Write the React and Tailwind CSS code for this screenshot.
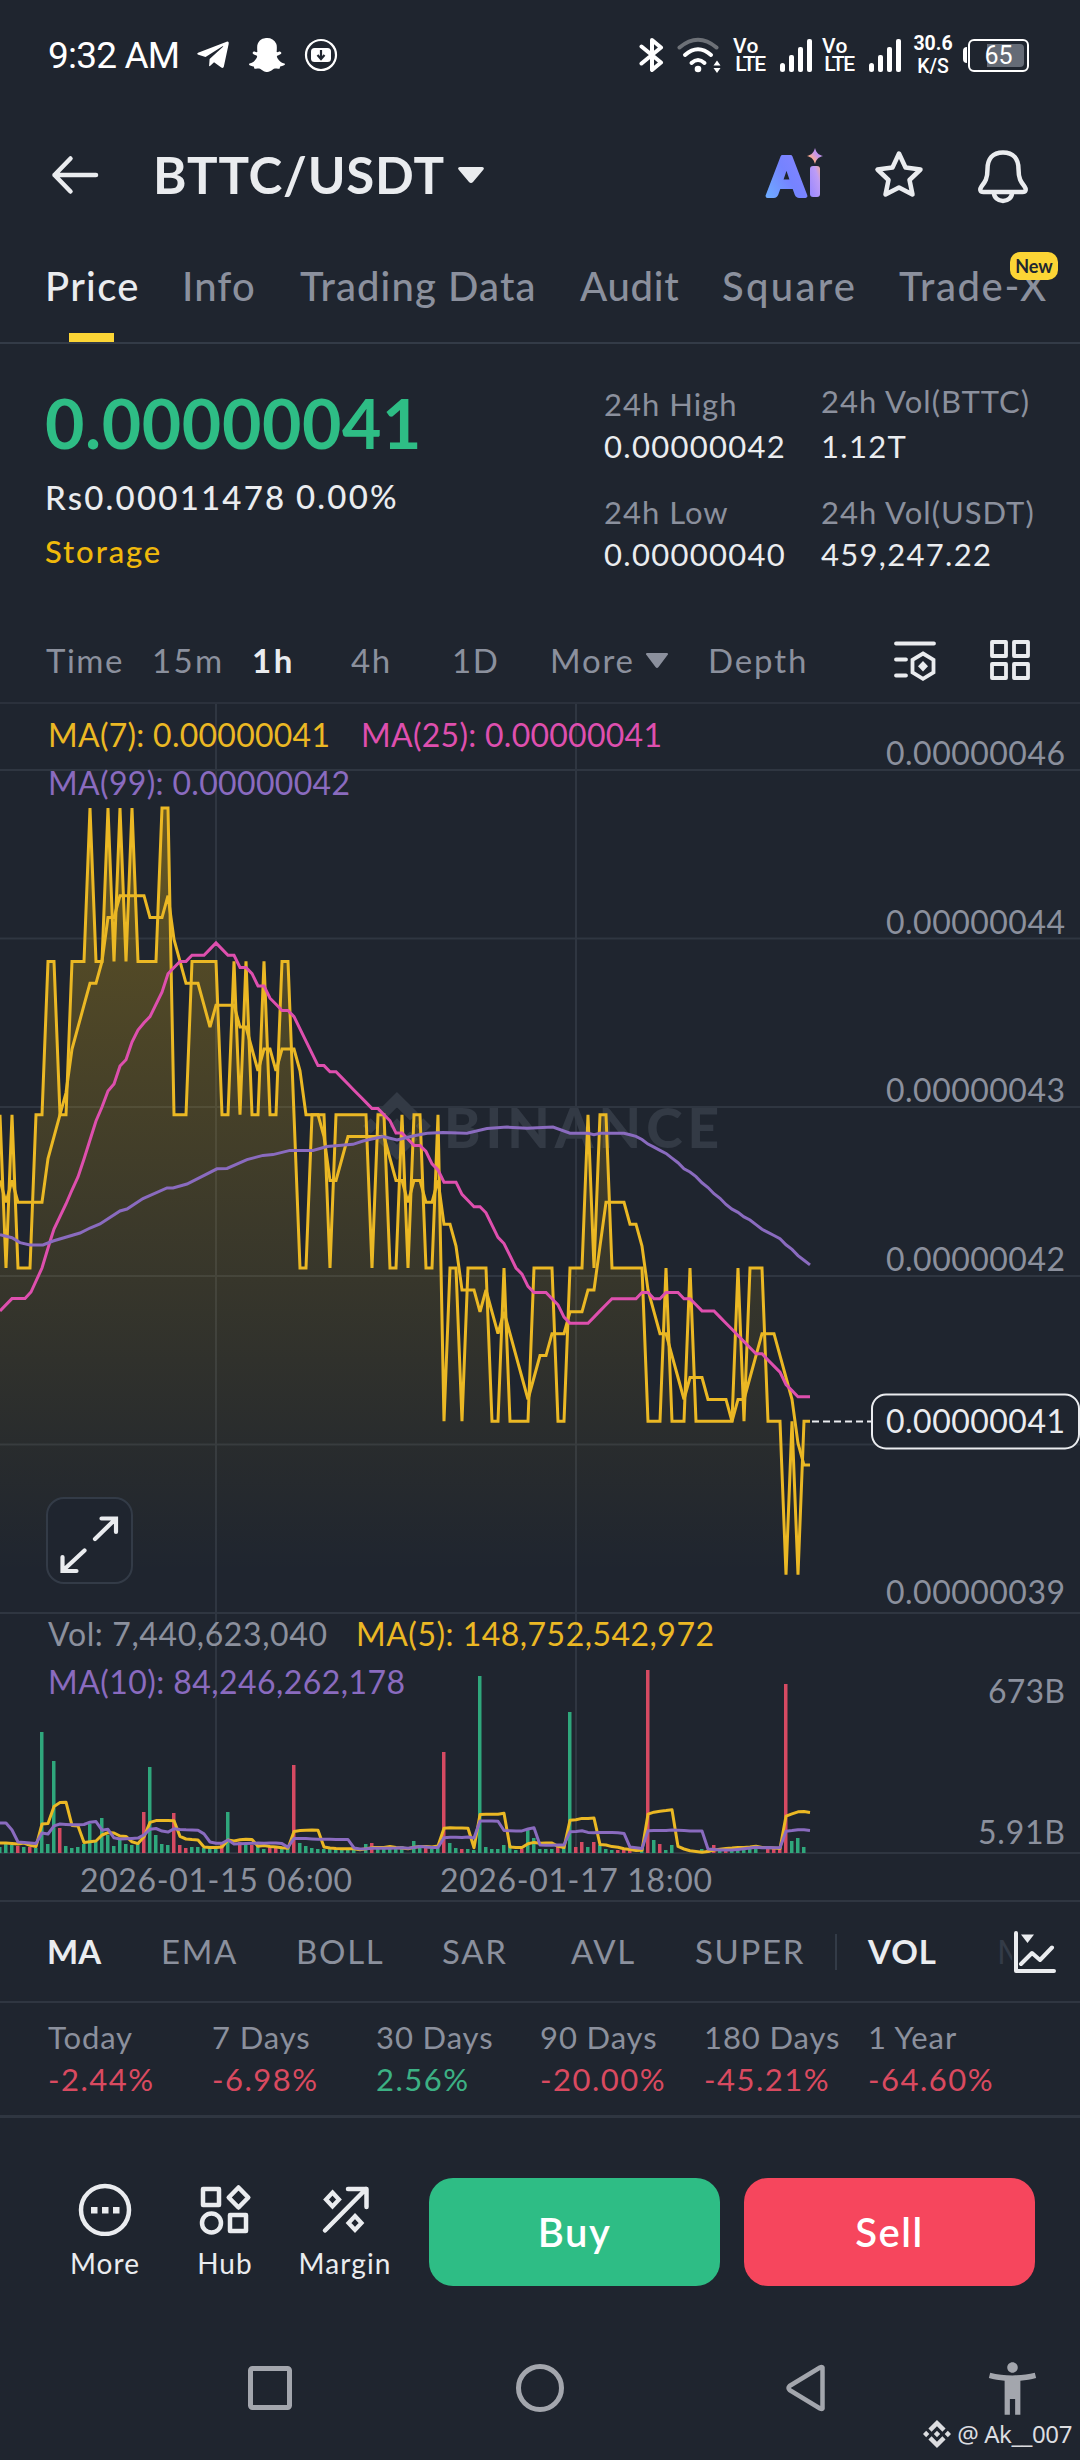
import { FaSnapchatGhost, FaTelegramPlane } from 'react-icons/fa'
import { MdAccessibilityNew } from 'react-icons/md'
import { SiBinance } from 'react-icons/si'

const STEP = 6
const CHART_TOP = 704
const UP = '#2fa77c'
const DOWN = '#d64a62'

/** Hourly closes as price ticks, oldest first. The first six sit left of the viewport and only feed MA(7). */
const TICKS = [
  '323223',
  '3232223344',
  '3344454454',
  '5454444553',
  '3344444334',
  '3433433443',
  '2233323333',
  '3323322323',
  '3223122122',
  '2211211112',
  '2221122232',
  '3322222211',
  '1211121111',
  '1112122211',
  '101011',
].join('')

const CLOSES = [...TICKS].map(Number)
const HISTORY = 6

/** [bar index, height, isDown] */
const VOLUMES = [
  [0, 6], [1, 11], [2, 8], [3, 7, 1], [4, 6], [5, 6, 1], [6, 5], [7, 121], [8, 9], [9, 92], [10, 25, 1],
  [11, 7], [12, 5], [13, 6], [14, 9], [15, 29], [16, 11], [17, 35], [18, 18], [19, 7], [20, 14], [21, 9],
  [22, 8], [23, 9], [24, 41, 1], [25, 86], [26, 18], [27, 9], [28, 8], [29, 40, 1], [30, 8, 1], [31, 5, 1],
  [32, 6], [33, 6], [34, 5], [35, 5], [36, 5], [37, 9, 1], [38, 41], [40, 11, 1], [41, 8], [42, 8, 1],
  [43, 7], [44, 4], [45, 6, 1], [46, 5, 1], [47, 4], [48, 5], [49, 88, 1], [50, 10], [51, 7], [52, 5],
  [53, 4], [54, 4], [55, 5], [56, 4], [57, 4], [58, 4], [59, 4], [61, 9], [62, 10, 1], [63, 4], [64, 4],
  [65, 5], [66, 5], [67, 7], [69, 12], [70, 8], [71, 6, 1], [72, 4], [73, 5], [74, 101, 1], [75, 10],
  [76, 5], [77, 4, 1], [78, 4], [79, 3], [80, 177], [81, 6], [82, 4], [83, 4], [84, 8], [85, 8], [86, 3],
  [87, 4, 1], [88, 23], [89, 15], [90, 4], [91, 4], [92, 4], [93, 6, 1], [94, 9], [95, 141], [96, 6, 1],
  [97, 11, 1], [98, 6], [99, 11, 1], [100, 8], [101, 4], [102, 3], [103, 3, 1], [104, 3, 1], [105, 4, 1],
  [107, 4], [108, 183, 1], [109, 13], [110, 9, 1], [111, 3], [112, 8], [117, 4], [118, 3, 1], [119, 8, 1],
  [120, 4], [121, 4, 1], [122, 6], [123, 6], [124, 7], [125, 7], [126, 8], [128, 5, 1], [129, 5, 1],
  [130, 5, 1], [131, 169, 1], [132, 12], [133, 15], [134, 6],
]

// Slow averages need more history than the viewport has, so their left part is stored as points.
const MA25_HEAD = [
  [0, 1311], [12, 1298.6], [25, 1298.6], [31, 1292], [42, 1268], [50, 1241.5], [54, 1229], [66, 1204], [72, 1190],
  [78, 1177], [84, 1159], [90, 1140], [96, 1121], [102, 1107], [108, 1091], [114, 1084], [120, 1066],
  [126, 1059.7], [132, 1042], [138, 1030],
]
const MA99_HEAD = [
  [0, 1234.6], [12, 1237.7], [20, 1242.6], [30, 1244.9], [43, 1244.9], [53, 1241], [80, 1233], [90, 1228],
  [100, 1224], [120, 1211], [127, 1209], [143, 1198.6], [167, 1188], [173, 1188], [187, 1184], [217, 1168.8],
  [227, 1168.4], [247, 1159.6], [263, 1155.4], [273, 1154.6], [290, 1150.4], [313, 1150.4], [327, 1146.6],
  [353, 1144.3], [363, 1141], [383, 1136.6], [397, 1140], [413, 1136], [427, 1133.2], [443, 1132.4],
  [467, 1133.2], [487, 1128.6], [507, 1127.1], [527, 1128.2], [553, 1127.1], [570, 1133.2],
]

const priceY = (tick) => 1574.6 - tick * 153.3
const toPoints = (pts) => pts.map(([x, y]) => `${x},${(y - CHART_TOP).toFixed(1)}`).join(' ')

function movingAverage(period, from) {
  const out = []
  for (let i = Math.max(from + HISTORY, period - 1); i < CLOSES.length; i++) {
    const slice = CLOSES.slice(i - period + 1, i + 1)
    out.push([(i - HISTORY) * STEP, priceY(slice.reduce((a, b) => a + b, 0) / period)])
  }
  return out
}

function volumeAverage(period, head) {
  const bars = Array(136).fill(0)
  VOLUMES.forEach(([i, h]) => {
    bars[i] = h
  })
  return bars.map((_, i) => {
    const sum = bars.slice(Math.max(0, i - period + 1), i + 1).reduce((a, b) => a + b, 0)
    return [i * STEP, 1853 - (head[i] ?? sum / period)]
  })
}

const closePoints = CLOSES.slice(HISTORY).map((t, i) => [i * STEP, priceY(t)])
const ma7 = movingAverage(7, 0)
const ma25 = [...MA25_HEAD, ...movingAverage(25, 24)]
const ma99 = [...MA99_HEAD, ...movingAverage(99, 98)]
const volMa5 = volumeAverage(5, [10, 10, 9.5, 9, 10])
const volMa10 = volumeAverage(10, [30, 30, 23, 11, 10.5, 10, 9.5, 20, 19])

const stroke = {
  fill: 'none',
  stroke: 'currentColor',
  strokeWidth: 4,
  strokeLinecap: 'round',
  strokeLinejoin: 'round',
}

function SignalBars({ className }) {
  return (
    <svg viewBox="0 0 33 33" className={className} fill="currentColor">
      <rect x="0" y="24" width="5" height="9" rx="2.5" />
      <rect x="9" y="16" width="5" height="17" rx="2" />
      <rect x="18" y="8" width="5" height="25" rx="2" />
      <rect x="27" y="0" width="5" height="33" rx="2" />
    </svg>
  )
}

function VoLte({ className }) {
  return (
    <div className={`flex w-8 flex-col text-center text-[21px] leading-[18px] font-medium ${className}`}>
      <span className="-ml-2 tracking-[0.5px]">Vo</span>
      <span className="tracking-[-1.3px]">LTE</span>
    </div>
  )
}

function StatusBar() {
  return (
    <div className="flex h-[110px] items-center pl-[48px] font-[Roboto,sans-serif] text-white">
      <span className="w-[147px] text-[37px] leading-none tracking-[-0.8px]">9:32 AM</span>
      <FaTelegramPlane className="h-9 w-9" />
      <FaSnapchatGhost className="ml-[18px] h-9 w-9" />
      <svg viewBox="0 0 34 34" className="ml-[19px] h-[34px] w-[34px]">
        <circle cx="17" cy="17" r="15" fill="none" stroke="currentColor" strokeWidth="2.2" />
        <rect x="7" y="10" width="20" height="14" rx="3.5" fill="currentColor" />
        <path d="M17 12v8M13.5 17l3.5 4 3.5-4" stroke="#1f252f" strokeWidth="2.2" fill="none" />
      </svg>
      <svg viewBox="0 0 26 36" className="ml-[301px] h-9 w-[26px]">
        <path d="M2.5 9.5 22 25.5 13 33V3L22 10.5 2.5 26.5" {...stroke} />
      </svg>
      <svg
        viewBox="0 0 45 38"
        className="ml-[12px] h-[38px] w-[45px]"
        fill="none"
        stroke="currentColor"
        strokeWidth="4"
        strokeLinecap="round"
      >
        <path d="M2.5 11.5Q21-4 39.5 11.5" opacity="0.35" />
        <path d="M8 19Q21 7.5 34 19M14.5 27Q21 21 27.5 27" />
        <circle cx="21" cy="33" r="3.3" fill="currentColor" stroke="none" />
        <path d="M36.5 29.5l3.5-5 3.5 5zM36.5 32l3.5 5 3.5-5z" fill="currentColor" stroke="none" />
      </svg>
      <VoLte className="ml-[12px]" />
      <SignalBars className="ml-[14px] h-[33px] w-[33px]" />
      <VoLte className="ml-[10px]" />
      <SignalBars className="ml-[14px] h-[33px] w-[33px]" />
      <div className="ml-[9px] flex w-[44px] flex-col items-center text-[19.5px] leading-[23px] font-bold">
        <span>30.6</span>
        <span className="font-medium">K/S</span>
      </div>
      <div className="ml-[8px] h-4 w-1 rounded-l-sm bg-white" />
      <div className="relative ml-px flex h-[33px] w-[61px] items-center justify-center rounded-[6px] border-[2.5px] border-white">
        <div className="absolute inset-y-[3px] right-[3px] left-[17px] rounded-r-sm bg-[#656b76]" />
        <span className="relative text-[25px] leading-none">65</span>
      </div>
    </div>
  )
}

function Header() {
  return (
    <header className="flex h-[129px] items-center pl-[50px] text-[#eaecef]">
      <svg viewBox="0 0 50 40" className="h-10 w-[50px]">
        <path d="M46 20H4.5M20.5 3.5 4.5 20 20.5 36.5" {...stroke} strokeWidth="4.5" />
      </svg>
      <h1 className="ml-[53px] w-[303px] text-[51px] leading-none font-bold tracking-[0.8px]">BTTC/USDT</h1>
      <svg viewBox="0 0 28 18" className="ml-px h-[18px] w-7" fill="currentColor">
        <path d="M3 1h22c1.8 0 2.5 1.500 1.300 2.800L16 16c-1.200 1.300-2.800 1.300-4 0L1.700 3.800C.5 2.500 1.200 1 3 1z" />
      </svg>
      <svg viewBox="0 0 60 54" className="ml-[280px] h-[54px] w-[60px]">
        <defs>
          <linearGradient id="aiLetter" x1="0" y1="1" x2="1" y2="0">
            <stop offset="0" stopColor="#6cb2ff" />
            <stop offset="0.5" stopColor="#7583ff" />
            <stop offset="1" stopColor="#8a86ff" />
          </linearGradient>
          <linearGradient id="aiStem" x1="0" y1="1" x2="1" y2="0">
            <stop offset="0" stopColor="#9787ff" />
            <stop offset="0.7" stopColor="#bd9cf5" />
            <stop offset="1" stopColor="#f0a9a0" />
          </linearGradient>
          <linearGradient id="aiSpark" x1="0" y1="1" x2="1" y2="0">
            <stop offset="0.3" stopColor="#ffad8f" />
            <stop offset="0.6" stopColor="#c495ee" />
          </linearGradient>
        </defs>
        <text
          x="3"
          y="47.5"
          textLength="37"
          lengthAdjust="spacingAndGlyphs"
          className="font-[Lato,sans-serif] text-[54px] font-black"
          fill="url(#aiLetter)"
          stroke="url(#aiLetter)"
          strokeWidth="4"
          strokeLinejoin="round"
        >
          A
        </text>
        <rect x="45" y="18" width="10" height="31" rx="3" fill="url(#aiStem)" />
        <path d="M50 0c1.5 5 3 6.5 8 8-5 1.5-6.5 3-8 8-1.5-5-3-6.5-8-8 5-1.5 6.5-3 8-8z" fill="url(#aiSpark)" />
      </svg>
      <svg viewBox="0 0 58 58" className="ml-[45px] h-[58px] w-[58px]">
        <path
          d="M29 7.5 35.5 21.5 50.5 23.5 39.5 34 42.5 48.5 29 41.5 15.5 48.5 18.5 34 7.5 23.5 22.5 21.5z"
          {...stroke}
          strokeWidth="4.5"
        />
      </svg>
      <svg viewBox="0 0 58 60" className="ml-[46px] h-[60px] w-[58px]">
        <path
          d="M29 7.5C18.5 7.5 13.5 14 13.5 24 13.5 34 11 37 7.5 41.5 5.5 44.5 6 47 9.5 47H48.5C52 47 52.5 44.5 50.5 41.5 47 37 44.5 34 44.5 24 44.5 14 39.5 7.5 29 7.5zM20 48a9 8 0 0 0 18 0"
          {...stroke}
          strokeWidth="4.5"
        />
      </svg>
    </header>
  )
}

function Tabs() {
  return (
    <nav className="flex h-[105px] items-stretch border-b-2 border-[#333b47] pl-[45px] text-[40px] leading-[95px] font-medium text-[#8b909d]">
      <div className="relative w-[137px] tracking-[1.3px] text-[#eaecef]">
        Price
        <span className="absolute bottom-0 left-6 h-[9px] w-[45px] bg-[#fcd535]" />
      </div>
      <span className="w-[118px] tracking-[1.1px]">Info</span>
      <span className="w-[280px] tracking-[1.1px]">Trading Data</span>
      <span className="w-[142px] tracking-[0.7px]">Audit</span>
      <span className="w-[177px] tracking-[2.3px]">Square</span>
      <div className="relative tracking-[1.6px]">
        Trade-X
        <span className="absolute top-[13px] left-[111px] h-7 w-12 rounded-[10px] bg-[#fcd535] text-center text-[18px] leading-7 font-bold tracking-normal text-[#202630]">
          New
        </span>
      </div>
    </nav>
  )
}

function Stat({ label, value, className = '' }) {
  return (
    <div className={`flex flex-col text-[31px] leading-[42px] tracking-[1px] ${className}`}>
      <span className="text-[#8b909d]">{label}</span>
      <span className="tracking-[1.3px] text-[#eaecef]">{value}</span>
    </div>
  )
}

function PriceSummary() {
  return (
    <section className="flex h-[274px] pt-[39px]">
      <div className="flex w-[604px] flex-col pl-[45px]">
        <span className="text-[68px] leading-[80px] font-bold tracking-[0.6px] text-[#2ebd85]">0.00000041</span>
        <div className="mt-[12px] flex text-[33px] leading-[44px] font-medium text-[#eaecef]">
          <span className="w-[251px] tracking-[2.2px]">Rs0.00011478</span>
          <span className="-mt-px tracking-[2.2px]">0.00%</span>
        </div>
        <span className="mt-[12px] text-[31px] leading-10 font-medium tracking-[1.9px] text-[#f0b90b]">Storage</span>
      </div>
      <div className="flex w-[217px] flex-col gap-6">
        <Stat label="24h High" value="0.00000042" />
        <Stat label="24h Low" value="0.00000040" />
      </div>
      <div className="flex flex-col gap-6">
        <Stat label="24h Vol(BTTC)" value="1.12T" className="-mt-[3px] gap-[3px]" />
        <Stat label="24h Vol(USDT)" value="459,247.22" />
      </div>
    </section>
  )
}

function IntervalBar() {
  return (
    <div className="flex h-[86px] items-center border-b-2 border-[#2b313c] pl-[46px] text-[33px] leading-none tracking-[1.5px] text-[#8b909d]">
      <span className="w-[106px]">Time</span>
      <span className="w-[100px] tracking-[2.3px]">15m</span>
      <span className="w-[99px] font-bold tracking-[2.5px] text-[#eaecef]">1h</span>
      <span className="w-[101px]">4h</span>
      <span className="w-[98px]">1D</span>
      <span className="w-[96px] tracking-[1.8px]">More</span>
      <svg viewBox="0 0 22 15" className="h-[15px] w-[22px]" fill="currentColor">
        <path d="M1.5 0h19c1.500 0 2 1 1 2L12.500 14c-1 1.200-2 1.200-3 0L.5 2C-.5 1 0 0 1.500 0z" />
      </svg>
      <span className="ml-[40px] w-[184px] tracking-[1.9px]">Depth</span>
      <svg viewBox="0 0 46 44" className="h-11 w-[46px] text-[#eaecef]">
        <path d="M4 5.5H42M4 21.5H14M4 37.5H14" {...stroke} strokeWidth="3.8" />
        <path
          d="M31 15.5 41.5 21.8V34.5L31 40.8 20.5 34.5V21.8z"
          {...stroke}
          strokeLinejoin="miter"
          strokeWidth="3.8"
        />
        <path d="M31 23l5 5.2-5 5.2-5-5.2z" fill="currentColor" />
      </svg>
      <svg viewBox="0 0 44 44" className="ml-[49px] h-11 w-11 text-[#eaecef]">
        <path d="M5 4h14v14H5zM27 4h14v14H27zM5 26h14v14H5zM27 26h14v14H27z" {...stroke} strokeWidth="3.8" />
      </svg>
    </div>
  )
}

function Label({ x, y, width, color = '#8b909d', children }) {
  return (
    <text x={x} y={y - CHART_TOP} fill={color} textLength={width} className="text-[32px]">
      {children}
    </text>
  )
}

function Chart() {
  const lastX = (closePoints.length - 1) * STEP
  return (
    <section className="h-[1196px]">
      <svg viewBox="0 0 1080 1196" className="block h-[1196px] w-full font-[Lato,sans-serif]" fill="none">
        <defs>
          <linearGradient id="priceArea" gradientUnits="userSpaceOnUse" x1="0" y1="104" x2="0" y2="909">
            <stop offset="0" stopColor="#f0b90b" stopOpacity="0.36" />
            <stop offset="0.2" stopColor="#f0b90b" stopOpacity="0.24" />
            <stop offset="0.57" stopColor="#f0b90b" stopOpacity="0.12" />
            <stop offset="0.78" stopColor="#f0b90b" stopOpacity="0.05" />
            <stop offset="0.95" stopColor="#f0b90b" stopOpacity="0" />
          </linearGradient>
        </defs>

        <g stroke="#2f3641" strokeWidth="2">
          {[66, 234.5, 403, 572, 740.5].map((y) => (
            <path key={y} d={`M0 ${y}H1080`} />
          ))}
          <path d="M216 0V1149M576 0V1149M0 909H1080M0 1149H1080" />
        </g>

        <g fill="#333a45" color="#333a45">
          <SiBinance x="363" y="388" size={68} />
          <text x="444" y="444" textLength="275" className="text-[55px] font-black">
            BINANCE
          </text>
        </g>

        <polygon points={`0,909 ${toPoints(closePoints)} ${lastX},909`} fill="url(#priceArea)" />
        <g strokeWidth="3">
          <polyline points={toPoints(closePoints)} stroke="#ebb824" strokeMiterlimit="2" />
          <polyline points={toPoints(ma7)} stroke="#ebb824" strokeMiterlimit="2" />
          <polyline points={toPoints(ma25)} stroke="#de4fae" />
          <polyline points={toPoints(ma99)} stroke="#8a6bbf" />
        </g>

        <Label x="48" y="747" width="282" color="#ebb824">MA(7): 0.00000041</Label>
        <Label x="361" y="747" width="301" color="#de4fae">MA(25): 0.00000041</Label>
        <Label x="48" y="795" width="302" color="#8a6bbf">MA(99): 0.00000042</Label>

        <Label x="886" y="765" width="179">0.00000046</Label>
        <Label x="886" y="933.5" width="179">0.00000044</Label>
        <Label x="886" y="1102" width="179">0.00000043</Label>
        <Label x="886" y="1270.5" width="179">0.00000042</Label>
        <Label x="886" y="1604" width="179">0.00000039</Label>

        <path d="M812 717.5H872" stroke="#eaecef" strokeWidth="2" strokeDasharray="7 4" />
        <rect x="872" y="690.5" width="207" height="54" rx="14" fill="#1f252f" stroke="#eaecef" strokeWidth="2" />
        <Label x="886" y="1433" width="179" color="#eaecef">0.00000041</Label>

        <g transform="translate(46 793)">
          <rect x="1" y="1" width="85" height="85" rx="17" fill="#1f252f" stroke="#333b47" strokeWidth="2" />
          <path
            d="M49 42 69 22.5M55.5 21.5H70V35M38.5 53.5 17.5 73M16.5 60V74H30.5"
            stroke="#eaecef"
            strokeWidth="4.2"
            strokeLinecap="round"
          />
        </g>

        {VOLUMES.map(([i, h, down]) => (
          <rect key={i} x={i * STEP - 2} y={1149 - h} width="3.5" height={h} fill={down ? DOWN : UP} />
        ))}
        <g strokeWidth="3" strokeLinejoin="round">
          <polyline points={toPoints(volMa5)} stroke="#ebb824" />
          <polyline points={toPoints(volMa10)} stroke="#8a6bbf" />
        </g>

        <Label x="48" y="1646" width="279">Vol: 7,440,623,040</Label>
        <Label x="356" y="1646" width="358" color="#ebb824">MA(5): 148,752,542,972</Label>
        <Label x="48" y="1694" width="357" color="#8a6bbf">MA(10): 84,246,262,178</Label>
        <Label x="988" y="1703" width="77">673B</Label>
        <Label x="978" y="1844" width="87">5.91B</Label>
        <Label x="80" y="1892" width="272">2026-01-15 06:00</Label>
        <Label x="440" y="1892" width="272">2026-01-17 18:00</Label>
      </svg>
    </section>
  )
}

function IndicatorBar() {
  return (
    <div className="flex h-[103px] items-center border-y-2 border-[#2f3641] pl-[47px] text-[33px] leading-none tracking-[1.7px] text-[#8b909d]">
      <span className="w-[114px] font-bold tracking-normal text-[#eaecef]">MA</span>
      <span className="w-[135px]">EMA</span>
      <span className="w-[146px]">BOLL</span>
      <span className="w-[129px]">SAR</span>
      <span className="w-[124px]">AVL</span>
      <span className="w-[140px]">SUPER</span>
      <span className="h-9 w-0.5 bg-[#333b47]" />
      <span className="ml-[31px] w-[129px] font-bold tracking-[1px] text-[#eaecef]">VOL</span>
      <span className="w-[15px] overflow-hidden text-[#333b47]">M</span>
      <svg viewBox="0 0 46 46" className="h-[46px] w-[46px] text-[#eaecef]">
        <path d="M4 4V42H42M9 35 20 24 28 31 40 18.5" {...stroke} />
        <path d="M9 5.5H22L15.5 14z" fill="currentColor" />
      </svg>
    </div>
  )
}

const PERIODS = [
  { label: 'Today', change: '-2.44%' },
  { label: '7 Days', change: '-6.98%' },
  { label: '30 Days', change: '2.56%' },
  { label: '90 Days', change: '-20.00%' },
  { label: '180 Days', change: '-45.21%' },
  { label: '1 Year', change: '-64.60%' },
]

function PerformanceRow() {
  return (
    <div className="flex h-[115px] border-b-[3px] border-[#2f3641] pt-[13px] pl-[48px] text-[31px] leading-[42px] tracking-[0.9px]">
      {PERIODS.map(({ label, change }) => (
        <div key={label} className="flex w-[164px] shrink-0 flex-col whitespace-nowrap">
          <span className="text-[#8b909d]">{label}</span>
          <span className={`tracking-[1.5px] ${change.startsWith('-') ? 'text-[#d94a60]' : 'text-[#3cb184]'}`}>
            {change}
          </span>
        </div>
      ))}
    </div>
  )
}

function Shortcut({ label, children }) {
  return (
    <div className="flex w-[120px] flex-col items-center pt-[4px]">
      <svg viewBox="0 0 54 54" className="h-[54px] w-[54px]">
        {children}
      </svg>
      <span className="mt-[9px]">{label}</span>
    </div>
  )
}

function ActionBar() {
  return (
    <div className="flex h-[226px] pt-[60px] pl-[45px] text-[28px] leading-[36px] tracking-[1.1px] text-[#eaecef]">
      <Shortcut label="More">
        <circle cx="27" cy="28" r="24" {...stroke} strokeWidth="4.5" />
        <path d="M13 25h6.5v6.5h-6.5zM24 25h6.5v6.5h-6.5zM35 25h6.5v6.5h-6.5z" fill="currentColor" />
      </Shortcut>
      <Shortcut label="Hub">
        <path
          d="M5 7h16v16H5zM40.5 5.5l9.8 10-9.8 10-9.8-10zM32 33h16v16H32z"
          {...stroke}
          strokeWidth="4.5"
        />
        <circle cx="13.5" cy="41" r="9.5" {...stroke} strokeWidth="4.5" />
      </Shortcut>
      <Shortcut label="Margin">
        <path d="M7 48.5 48 7M30 7H48.5V25" {...stroke} strokeWidth="4.5" />
        <path
          d="M14.5 10.5l6.5 7-6.5 7-6.5-7zM37 34l6.5 7-6.5 7-6.5-7z"
          {...stroke}
          strokeLinejoin="miter"
          strokeWidth="4.2"
        />
      </Shortcut>
      <button
        type="button"
        className="ml-[24px] h-[108px] w-[291px] rounded-3xl bg-[#2ebd85] text-[40px] font-semibold tracking-[1.5px] text-white"
      >
        Buy
      </button>
      <button
        type="button"
        className="ml-[24px] h-[108px] w-[291px] rounded-3xl bg-[#f6465d] text-[40px] font-semibold tracking-[1.5px] text-white"
      >
        Sell
      </button>
    </div>
  )
}

function SystemNav() {
  return (
    <footer className="relative h-[116px] text-[#a3a6ad]">
      <div className="flex h-[88px] items-center pl-[246px]">
        <svg viewBox="0 0 48 48" className="h-12 w-12">
          <rect x="4.5" y="4.5" width="39" height="39" rx="2" {...stroke} strokeWidth="5" />
        </svg>
        <svg viewBox="0 0 50 50" className="ml-[221px] h-[50px] w-[50px]">
          <circle cx="25" cy="25" r="21.5" {...stroke} strokeWidth="5" />
        </svg>
        <svg viewBox="0 0 44 50" className="ml-[219px] h-[50px] w-11">
          <path
            d="M38.5 4.5V45.5Q38 46.5 36 45.5L5.5 27Q3.5 25 5.5 23L36 4.5Q38 3.5 38.5 4.5z"
            {...stroke}
            strokeWidth="4.5"
          />
        </svg>
        <MdAccessibilityNew className="ml-[153px] h-[63px] w-[63px]" />
      </div>
      <div className="absolute right-[8px] bottom-[12px] flex items-center text-[#dcdde0]">
        <SiBinance className="h-7 w-7" />
        <span className="ml-1.5 font-['Noto_Sans',sans-serif] text-[24px] leading-7 tracking-[-0.4px] whitespace-nowrap">
          @ Ak__007
        </span>
      </div>
    </footer>
  )
}

export default function App() {
  return (
    <div className="flex h-[2460px] w-[1080px] flex-col overflow-hidden bg-[#1f252f] font-[Lato,sans-serif]">
      <StatusBar />
      <Header />
      <Tabs />
      <PriceSummary />
      <IntervalBar />
      <Chart />
      <IndicatorBar />
      <PerformanceRow />
      <ActionBar />
      <SystemNav />
    </div>
  )
}
